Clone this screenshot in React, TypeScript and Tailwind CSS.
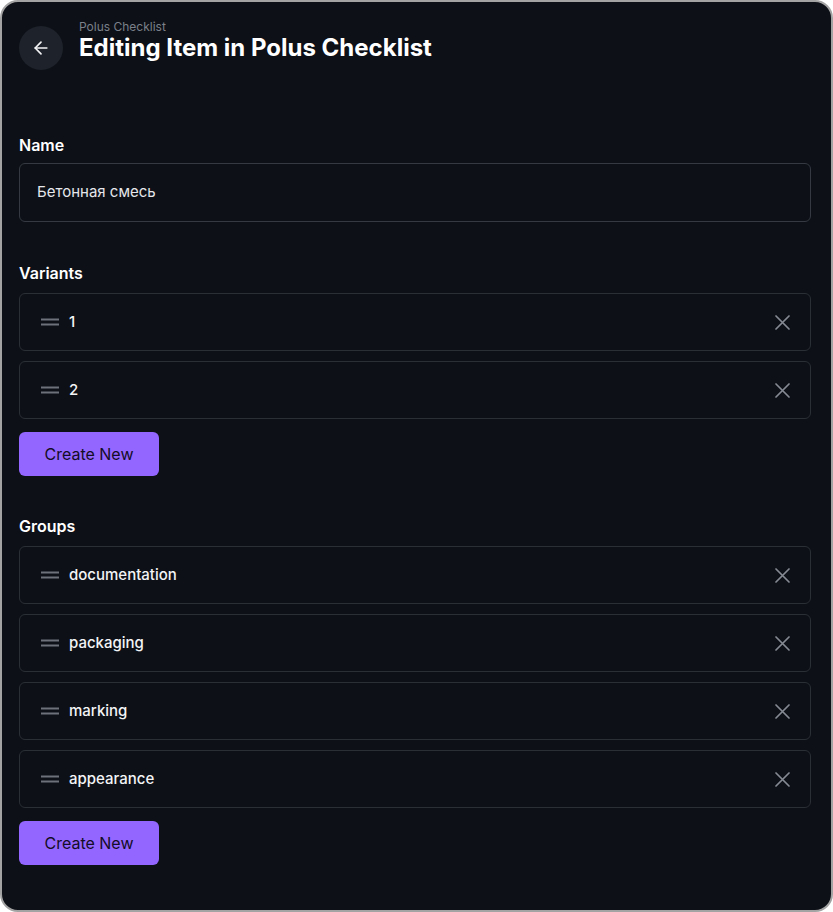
import { ArrowLeft } from "lucide-react";

const variants = ["1", "2"];
const groups = ["documentation", "packaging", "marking", "appearance"];

function DragHandle() {
  return (
    <svg width="18" height="8" viewBox="0 0 18 8" className="flex-none" aria-hidden="true">
      <path d="M0 1.5H18M0 6.5H18" stroke="#6c717a" strokeWidth="2" />
    </svg>
  );
}

function CloseIcon() {
  return (
    <svg width="15" height="15" viewBox="0 0 15 15" className="flex-none" aria-hidden="true">
      <path d="M1 1L14 14M14 1L1 14" stroke="#858a93" strokeWidth="1.7" strokeLinecap="round" />
    </svg>
  );
}

function ItemRow({ label }: { label: string }) {
  return (
    <div className="flex h-[58px] items-center rounded-md border border-[#2a2e35] pl-[21px] pr-[20px]">
      <DragHandle />
      <span className="ml-[10px] flex-1 text-[15px] font-medium text-[#f3f4f6]">{label}</span>
      <button type="button" className="flex items-center justify-center">
        <CloseIcon />
      </button>
    </div>
  );
}

function CreateButton() {
  return (
    <button
      type="button"
      className="h-11 w-[140px] rounded-md bg-[#9366ff] text-base font-normal text-[#140d26]"
    >
      Create New
    </button>
  );
}

export default function App() {
  return (
    <div className="bg-white" style={{ fontFamily: "Inter, 'Noto Sans', sans-serif" }}>
      <div className="h-[912px] overflow-hidden rounded-[18px] border-2 border-[#a3a3a3] bg-[#0d1017] pl-[17px] pr-[20px]">
        <header className="flex gap-4 pt-[24px]">
          <button
            type="button"
            className="flex h-11 w-11 flex-none items-center justify-center rounded-full bg-[#1e222a] text-[#f3f4f6]"
          >
            <ArrowLeft size={20} strokeWidth={2} />
          </button>
          <div className="-mt-[6px] flex flex-col">
            <span className="text-xs leading-[14px] text-[#7b808a]">Polus Checklist</span>
            <h1 className="text-2xl leading-[28px] font-bold text-white">Editing Item in Polus Checklist</h1>
          </div>
        </header>

        <section className="mt-[63px]">
          <div className="mb-1.5 text-base leading-6 font-semibold text-white">Name</div>
          <div className="flex h-[59px] items-center rounded-md border border-[#353a42] px-[17px] text-[15px] text-[#e5e7eb]">
            Бетонная смесь
          </div>
        </section>

        <section className="mt-[39px]">
          <div className="mb-2 text-base leading-6 font-semibold text-white">Variants</div>
          <div className="flex flex-col gap-2.5">
            {variants.map((v) => (
              <ItemRow key={v} label={v} />
            ))}
          </div>
          <div className="mt-[13px]">
            <CreateButton />
          </div>
        </section>

        <section className="mt-[38px]">
          <div className="mb-2 text-base leading-6 font-semibold text-white">Groups</div>
          <div className="flex flex-col gap-2.5">
            {groups.map((g) => (
              <ItemRow key={g} label={g} />
            ))}
          </div>
          <div className="mt-[13px]">
            <CreateButton />
          </div>
        </section>
      </div>
    </div>
  );
}
